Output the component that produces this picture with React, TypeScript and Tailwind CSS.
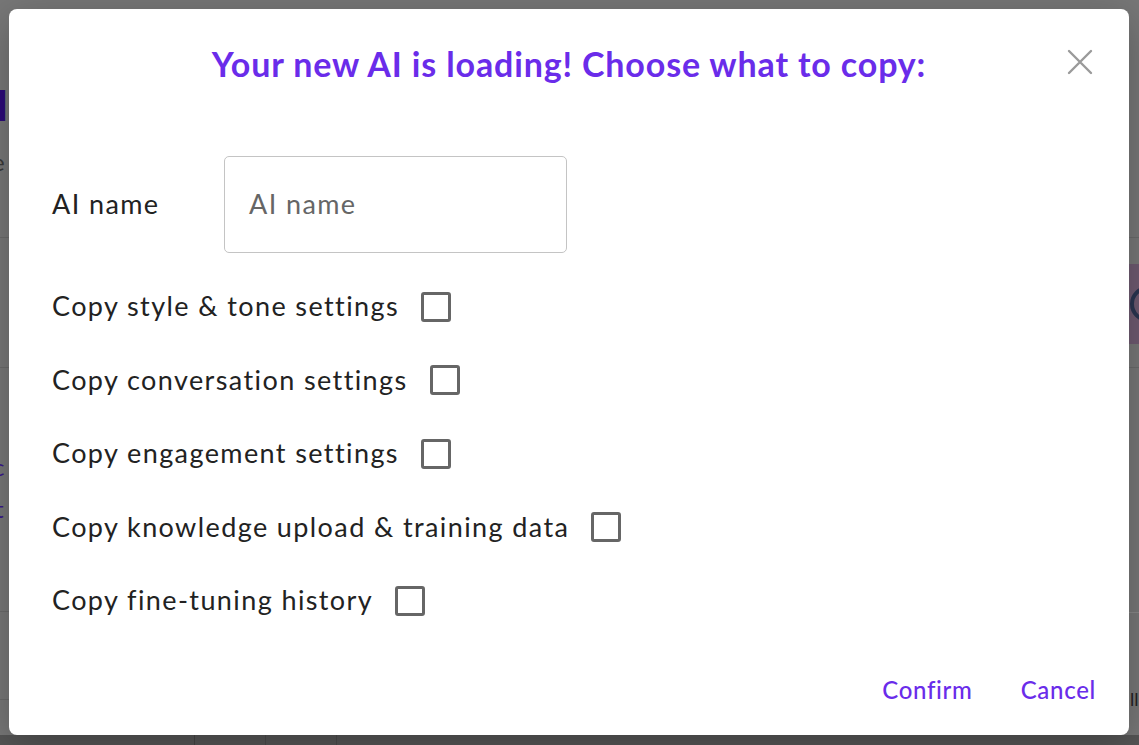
import React from "react";

const rows = [
  "Copy style & tone settings",
  "Copy conversation settings",
  "Copy engagement settings",
  "Copy knowledge upload & training data",
  "Copy fine-tuning history",
];

function Background() {
  return (
    <div className="w-[1139px] h-[745px] bg-[#777777] flex flex-col overflow-hidden">
      <div className="flex-1 flex justify-between">
        {/* left strip */}
        <div className="w-[20px] flex flex-col">
          <div className="h-[86px]" />
          <div className="h-[38px] text-[42px] leading-[38px] font-bold text-[#2c0a78] font-['Lato',sans-serif] -ml-[4px]">
            I
          </div>
          <div className="h-[58px] pt-[26px] text-[24px] leading-[24px] text-[#3a3a3a] font-['Lato',sans-serif] -ml-[8px]">
            e
          </div>
          <div className="h-[56px] border-b border-[#6a6a6a]" />
          <div className="h-[130px] border-b border-[#6a6a6a]" />
          <div className="h-[78px]" />
          <div className="text-[24px] leading-[42px] text-[#3a1a8a] font-['Lato',sans-serif] -ml-[7px]">c</div>
          <div className="text-[24px] leading-[42px] text-[#3a1a8a] font-['Lato',sans-serif] -ml-[5px]">t</div>
          <div className="h-[82px] border-b border-[#6a6a6a]" />
          <div className="h-[88px] border-b border-[#6a6a6a]" />
        </div>
        {/* right strip */}
        <div className="w-[20px] flex flex-col">
          <div className="h-[238px] border-b border-[#6a6a6a]" />
          <div className="h-[26px]" />
          <div className="h-[80px] bg-[#6e5a70] flex items-center pl-[11px]">
            <div className="w-[36px] h-[36px] shrink-0 rounded-full border-[4px] border-[#2a3550]" />
          </div>
          <div className="h-[24px] border-b border-[#6a6a6a]" />
          <div className="h-[245px] border-b border-[#888888]" />
          <div className="pt-[76px] pl-[11px] text-[18px] leading-[20px] text-[#222] font-['Lato',sans-serif]">ll</div>
        </div>
      </div>
      <div className="h-[10px] bg-[#555555] flex">
        <div className="w-[195px] border-r border-[#444]" />
        <div className="w-[71px] border-r border-[#4a4a4a]" />
        <div className="w-[71px] border-r border-[#4a4a4a]" />
      </div>
    </div>
  );
}

function CloseIcon() {
  return (
    <svg width="26" height="26" viewBox="0 0 26 26" fill="none">
      <path d="M2 2 L24 24 M24 2 L2 24" stroke="#9a9a9a" strokeWidth="2.4" strokeLinecap="round" />
    </svg>
  );
}

export default function App() {
  return (
    <div className="relative w-[1139px] h-[745px] overflow-hidden">
      <Background />
      <div className="absolute left-[9px] top-[9px] w-[1120px] h-[726px] bg-white rounded-[8px] shadow-[0_10px_40px_rgba(0,0,0,0.25)] flex flex-col font-['Lato',sans-serif]">
        <div className="relative pt-[35px] h-[77px]">
          <h2 className="text-center text-[34px] leading-[40px] font-bold text-[#6a2cea] tracking-[0.85px]">
            Your new AI is loading! Choose what to copy:
          </h2>
          <button className="absolute left-[1058px] top-[40px] w-[26px] h-[26px]">
            <CloseIcon />
          </button>
        </div>
        <div className="mt-[70px] pl-[43px] flex flex-col gap-[33.5px] text-[27px] tracking-[1.4px]">
          <div className="flex items-center h-[97px]">
            <div className="w-[172px] text-[#222]">AI name</div>
            <div className="w-[343px] h-[97px] border border-[#c4c4c4] rounded-[5px] flex items-center pl-[24px] text-[#666]">
              AI name
            </div>
          </div>
          {rows.map((r) => (
            <div key={r} className="flex items-center h-[40px]">
              <span className="text-[#222]">{r}</span>
              <span className="ml-[22px] w-[30px] h-[30px] border-[3px] border-[#666] rounded-[3px]" />
            </div>
          ))}
        </div>
        <div className="mt-auto mb-[30px] pr-[33px] flex justify-end gap-[48px] text-[24px] leading-[30px] font-medium tracking-[0.7px] text-[#6a2cea]">
          <span>Confirm</span>
          <span>Cancel</span>
        </div>
      </div>
    </div>
  );
}
